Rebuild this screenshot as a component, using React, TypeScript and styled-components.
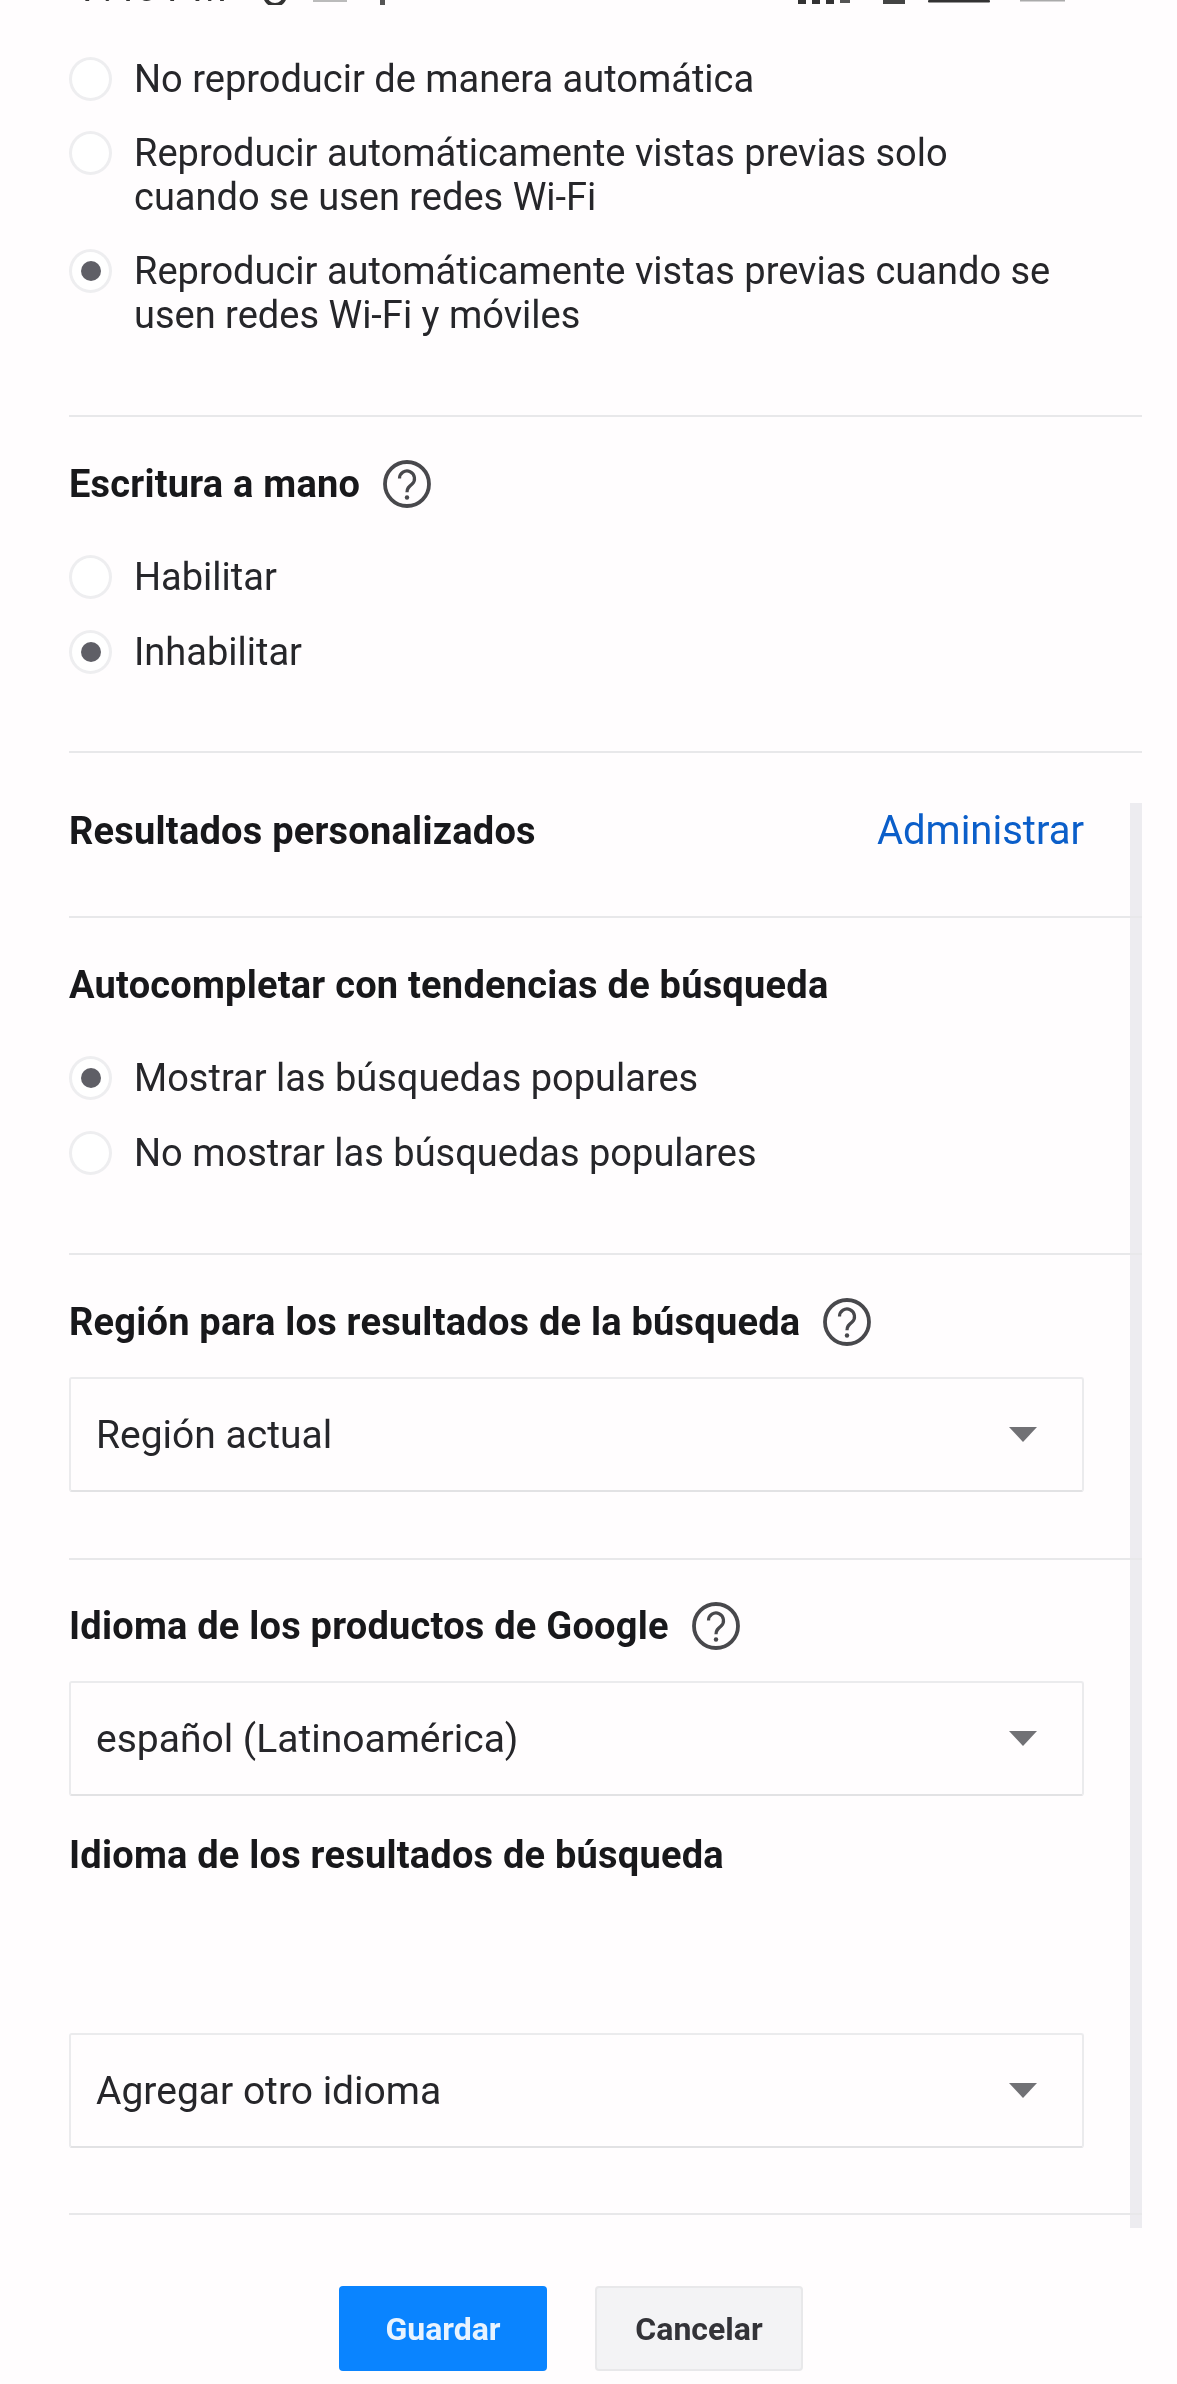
import styled, { createGlobalStyle } from "styled-components";

const GlobalStyle = createGlobalStyle`
  html, body {
    margin: 0;
    padding: 0;
    background: #fffdfe;
  }
`;

const Page = styled.div`
  position: relative;
  width: 1177px;
  height: 2384px;
  overflow: hidden;
  background: #fffdfe;
  color: #26262a;
  font-family: Roboto, "Liberation Sans", sans-serif;
  filter: blur(0.6px);
`;

// only the bottom few pixels of the phone status bar are left in the crop
const StatusBar = styled.div`
  display: flex;
  align-items: flex-start;
  justify-content: space-between;
  height: 5px;
  padding: 0 112px 0 80px;
  overflow: hidden;
  color: #333;
`;

const StatusGroup = styled.div`
  display: flex;
  align-items: flex-start;
  gap: 30px;
  font-size: 40px;
  line-height: 40px;
  white-space: nowrap;
`;

const StatusTime = styled.span`
  margin-top: -32px;
`;

const Body = styled.div`
  position: relative;
  z-index: 1;
  padding-left: 69px;
  width: 1073px;
`;

const Section = styled.section<{ $top: number; $bottom: number }>`
  padding: ${(p) => p.$top}px 58px ${(p) => p.$bottom}px 0;
  border-bottom: 2px solid #e8e8ea;
`;

const RadioList = styled.div<{ $gap: number; $top?: number }>`
  display: flex;
  flex-direction: column;
  gap: ${(p) => p.$gap}px;
  margin-top: ${(p) => p.$top ?? 0}px;
`;

const RadioRow = styled.label`
  display: flex;
  gap: 22px;
  font-size: 38px;
  line-height: 44px;
`;

const RadioCircle = styled.span<{ $on?: boolean }>`
  flex: none;
  display: flex;
  align-items: center;
  justify-content: center;
  box-sizing: border-box;
  width: 43px;
  height: 44px;
  border: 3px solid #eeeef0;
  border-radius: 50%;
  background: #fff;

  &::after {
    content: "";
    display: ${(p) => (p.$on ? "block" : "none")};
    width: 20px;
    height: 20px;
    border-radius: 50%;
    background: #5f5f66;
  }
`;

const Heading = styled.h2<{ $top?: number }>`
  display: flex;
  align-items: center;
  gap: 23px;
  margin: ${(p) => p.$top ?? 0}px 0 0;
  font-size: 38px;
  font-weight: 700;
  line-height: 48px;
  letter-spacing: 0.22px;
  color: #18181b;
`;

const SpacedRow = styled.div`
  display: flex;
  align-items: center;
  justify-content: space-between;
`;

const ManageLink = styled.a`
  font-size: 40px;
  line-height: 48px;
  color: #0b5ec9;
`;

const Select = styled.div<{ $top: number }>`
  display: flex;
  align-items: center;
  justify-content: space-between;
  box-sizing: border-box;
  height: 115px;
  margin-top: ${(p) => p.$top}px;
  padding: 0 45px 0 25px;
  border: 2px solid #ebebed;
  border-bottom-color: #e2e2e4;
  border-radius: 3px;
  font-size: 39px;
`;

const Caret = styled.span`
  width: 0;
  height: 0;
  border-left: 14px solid transparent;
  border-right: 14px solid transparent;
  border-top: 15px solid #717175;
`;

const Footer = styled.div`
  display: flex;
  justify-content: center;
  gap: 48px;
  padding: 71px 69px 0 0;
`;

const Button = styled.button<{ $primary?: boolean }>`
  box-sizing: border-box;
  width: 208px;
  height: 85px;
  border: ${(p) => (p.$primary ? "none" : "2px solid #e8e8ea")};
  border-radius: 4px;
  background: ${(p) => (p.$primary ? "#0a84ff" : "#f3f3f5")};
  color: ${(p) => (p.$primary ? "#e8f3ff" : "#333338")};
  font-family: inherit;
  font-size: 32px;
  font-weight: 700;
`;

const ScrollTrack = styled.div`
  position: absolute;
  top: 803px;
  left: 1130px;
  width: 12px;
  height: 1425px;
  background: #edecf0;
`;

function HelpIcon() {
  return (
    <svg width="48" height="48" viewBox="0 0 48 48" fill="none">
      <circle cx="24" cy="24" r="22" stroke="#48484c" strokeWidth="3.8" />
      <path
        d="M16.5 18.5a7.5 7.5 0 1 1 12.4 5.7c-3 2.5-4.9 3.9-4.9 8"
        stroke="#48484c"
        strokeWidth="3.2"
      />
      <circle cx="24" cy="37.5" r="2.2" fill="#48484c" />
    </svg>
  );
}

function Radio({ on, children }: { on?: boolean; children: React.ReactNode }) {
  return (
    <RadioRow>
      <RadioCircle $on={on} />
      <span>{children}</span>
    </RadioRow>
  );
}

export default function App() {
  return (
    <Page>
      <GlobalStyle />
      <StatusBar>
        <StatusGroup>
          <StatusTime>7:46 PM</StatusTime>
          <svg width="130" height="6" viewBox="0 0 130 6">
            <circle cx="18" cy="-5" r="10" fill="none" stroke="#333" strokeWidth="4" />
            <rect x="56" y="0" width="34" height="2" fill="#bbb" />
            <rect x="123" y="0" width="5" height="5" fill="#555" />
          </svg>
        </StatusGroup>
        <svg width="267" height="6" viewBox="0 0 267 6">
          <rect x="0" y="0" width="8" height="4" fill="#333" />
          <rect x="14" y="0" width="8" height="4" fill="#333" />
          <rect x="28" y="0" width="8" height="4" fill="#333" />
          <rect x="42" y="0" width="10" height="3" fill="#555" />
          <rect x="85" y="0" width="22" height="4" fill="#444" />
          <rect x="130" y="0" width="62" height="2.5" rx="1" fill="#333" />
          <rect x="222" y="0" width="45" height="1.5" fill="#aaa" />
        </svg>
      </StatusBar>
      <Body>
        <Section $top={52} $bottom={78}>
          <RadioList $gap={30}>
            <Radio>No reproducir de manera automática</Radio>
            <Radio>
              Reproducir automáticamente vistas previas solo
              <br />
              cuando se usen redes Wi-Fi
            </Radio>
            <Radio on>
              Reproducir automáticamente vistas previas cuando se
              <br />
              usen redes Wi-Fi y móviles
            </Radio>
          </RadioList>
        </Section>
        <Section $top={43} $bottom={77}>
          <Heading>
            Escritura a mano
            <HelpIcon />
          </Heading>
          <RadioList $gap={31} $top={47}>
            <Radio>Habilitar</Radio>
            <Radio on>Inhabilitar</Radio>
          </RadioList>
        </Section>
        <Section $top={54} $bottom={61}>
          <SpacedRow>
            <Heading>Resultados personalizados</Heading>
            <ManageLink>Administrar</ManageLink>
          </SpacedRow>
        </Section>
        <Section $top={43} $bottom={78}>
          <Heading>Autocompletar con tendencias de búsqueda</Heading>
          <RadioList $gap={31} $top={47}>
            <Radio on>Mostrar las búsquedas populares</Radio>
            <Radio>No mostrar las búsquedas populares</Radio>
          </RadioList>
        </Section>
        <Section $top={43} $bottom={66}>
          <Heading>
            Región para los resultados de la búsqueda
            <HelpIcon />
          </Heading>
          <Select $top={31}>
            Región actual
            <Caret />
          </Select>
        </Section>
        <Section $top={42} $bottom={65}>
          <Heading>
            Idioma de los productos de Google
            <HelpIcon />
          </Heading>
          <Select $top={31}>
            español (Latinoamérica)
            <Caret />
          </Select>
          <Heading $top={35}>Idioma de los resultados de búsqueda</Heading>
          <Select $top={154}>
            Agregar otro idioma
            <Caret />
          </Select>
        </Section>
        <Footer>
          <Button $primary>Guardar</Button>
          <Button>Cancelar</Button>
        </Footer>
      </Body>
      <ScrollTrack />
    </Page>
  );
}
